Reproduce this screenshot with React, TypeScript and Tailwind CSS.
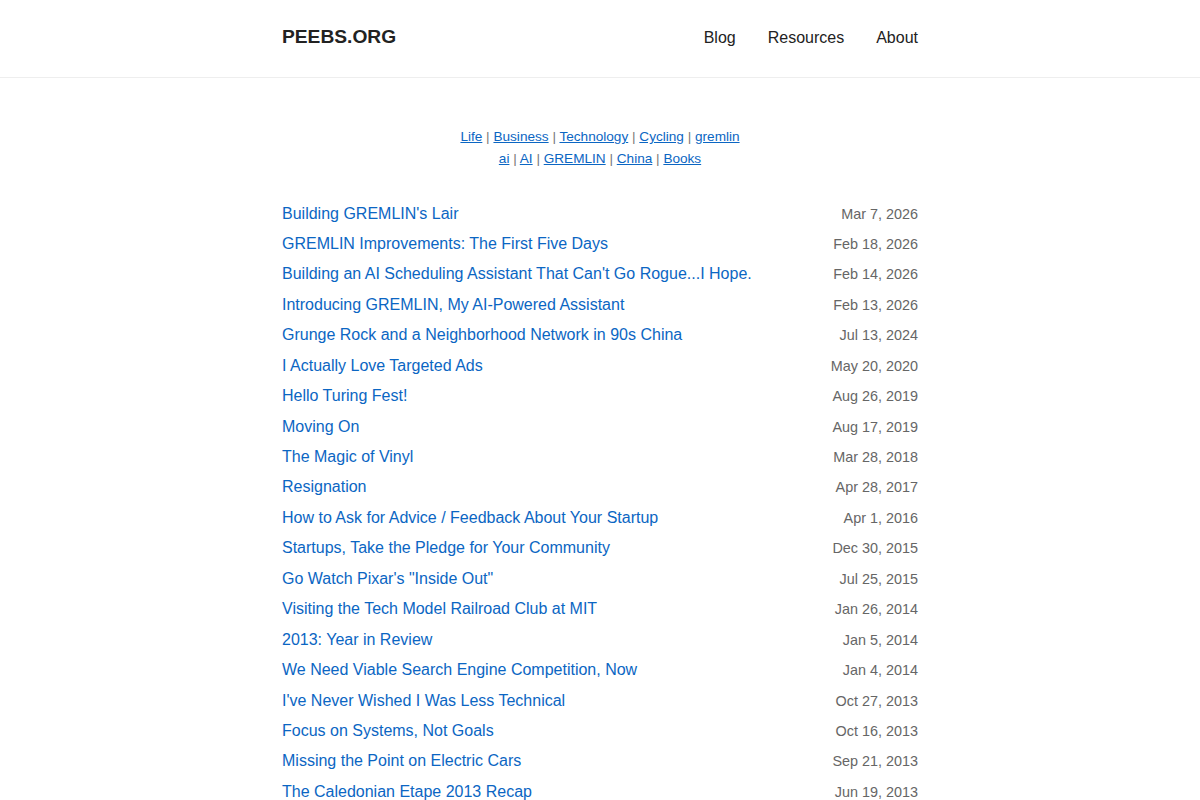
const tags = [
  ["Life", "Business", "Technology", "Cycling", "gremlin"],
  ["ai", "AI", "GREMLIN", "China", "Books"],
];

const posts: [string, string][] = [
  ["Building GREMLIN's Lair", "Mar 7, 2026"],
  ["GREMLIN Improvements: The First Five Days", "Feb 18, 2026"],
  ["Building an AI Scheduling Assistant That Can't Go Rogue...I Hope.", "Feb 14, 2026"],
  ["Introducing GREMLIN, My AI-Powered Assistant", "Feb 13, 2026"],
  ["Grunge Rock and a Neighborhood Network in 90s China", "Jul 13, 2024"],
  ["I Actually Love Targeted Ads", "May 20, 2020"],
  ["Hello Turing Fest!", "Aug 26, 2019"],
  ["Moving On", "Aug 17, 2019"],
  ["The Magic of Vinyl", "Mar 28, 2018"],
  ["Resignation", "Apr 28, 2017"],
  ["How to Ask for Advice / Feedback About Your Startup", "Apr 1, 2016"],
  ["Startups, Take the Pledge for Your Community", "Dec 30, 2015"],
  ['Go Watch Pixar\'s "Inside Out"', "Jul 25, 2015"],
  ["Visiting the Tech Model Railroad Club at MIT", "Jan 26, 2014"],
  ["2013: Year in Review", "Jan 5, 2014"],
  ["We Need Viable Search Engine Competition, Now", "Jan 4, 2014"],
  ["I've Never Wished I Was Less Technical", "Oct 27, 2013"],
  ["Focus on Systems, Not Goals", "Oct 16, 2013"],
  ["Missing the Point on Electric Cars", "Sep 21, 2013"],
  ["The Caledonian Etape 2013 Recap", "Jun 19, 2013"],
  ["Ten Years of Blogging", "May 2, 2013"],
];

export default function App() {
  return (
    <div className="min-h-screen bg-white text-[#222] font-['Liberation_Sans',Arial,sans-serif]">
      <header className="border-b border-[#eee]">
        <div className="mx-auto flex h-[77px] w-[636px] items-center justify-between pb-[2px]">
          <a href="#" className="text-[19.2px] font-bold text-[#222]">
            PEEBS.ORG
          </a>
          <nav className="flex gap-8 text-base text-[#222]">
            <a href="#">Blog</a>
            <a href="#">Resources</a>
            <a href="#">About</a>
          </nav>
        </div>
      </header>

      <main className="mx-auto w-[636px] pt-[48px]">
        <div className="text-center text-[13.6px] leading-[22px] text-[#777]">
          {tags.map((line, i) => (
            <div key={i}>
              {line.map((tag, j) => (
                <span key={tag}>
                  {j > 0 && " | "}
                  <a href="#" className="text-[#0b66c3] underline">
                    {tag}
                  </a>
                </span>
              ))}
            </div>
          ))}
        </div>

        <ul className="mt-[31.5px] flex flex-col gap-[6.45px]">
          {posts.map(([title, date]) => (
            <li key={title} className="flex items-baseline justify-between leading-6">
              <a href="#" className="text-base text-[#0b66c3]">
                {title}
              </a>
              <span className="text-[14.4px] text-[#666]">{date}</span>
            </li>
          ))}
        </ul>
      </main>
    </div>
  );
}
